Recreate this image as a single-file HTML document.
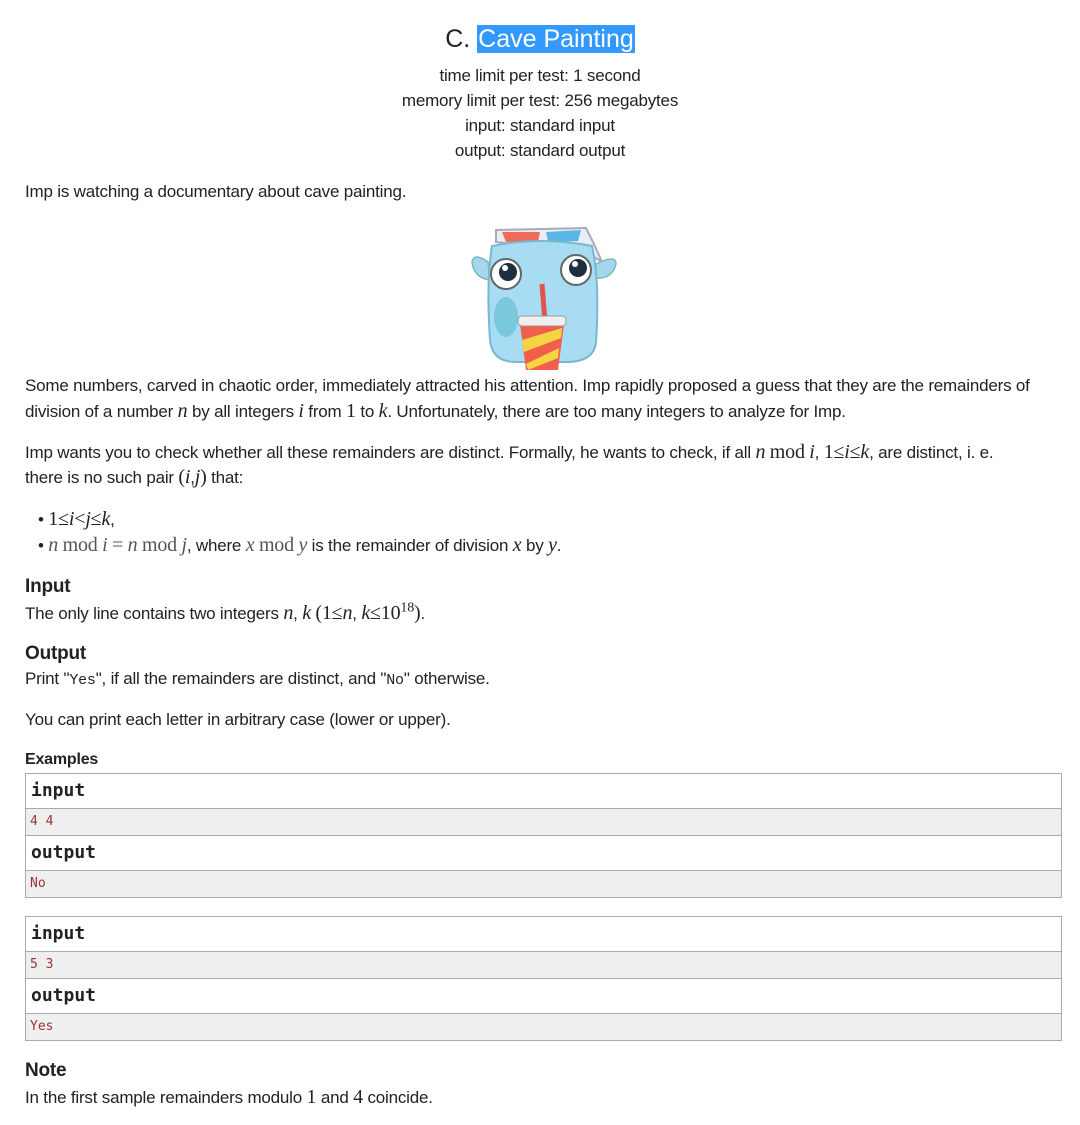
<!DOCTYPE html>
<html><head><meta charset="utf-8"><style>
body{margin:0;width:1080px;height:1125px;background:#fff;position:relative;font-family:"Liberation Sans",Arial,sans-serif;color:#222;font-size:17px;overflow:hidden}
.l{position:absolute;left:25px;white-space:nowrap;line-height:20px;letter-spacing:-0.2px}
.c{position:absolute;left:0;width:1080px;text-align:center;line-height:20px;letter-spacing:-0.2px}
.m{font-family:"Liberation Serif",serif;font-style:italic;font-size:20px}
.r{font-family:"Liberation Serif",serif;font-size:20px}
.h{font-weight:bold;font-size:19px}
.tt{font-family:"Liberation Mono",monospace;font-size:15px}
sup{line-height:0;font-size:14px}
.box{position:absolute;left:25px;width:1035px;border:1px solid #aaa;}
.hd{height:34px;line-height:34px;padding-left:5px;font-family:"DejaVu Sans Mono",monospace;font-weight:bold;font-size:18px;background:#fff;border-bottom:1px solid #aaa}
.dt{height:26px;line-height:26px;padding-left:4px;font-family:"DejaVu Sans Mono",monospace;font-size:13px;color:#993333;background:#efefef}
.dt.b{border-bottom:1px solid #aaa}
</style></head><body>
<div class="c" style="top:24px;font-size:25px;line-height:30px;letter-spacing:0">C. <span style="background:#3399ff;color:#fff;padding:0 1px">Cave Painting</span></div>
<div class="c" style="top:66px">time limit per test: 1 second</div>
<div class="c" style="top:91px">memory limit per test: 256 megabytes</div>
<div class="c" style="top:116px">input: standard input</div>
<div class="c" style="top:141px">output: standard output</div>
<div class="l" style="top:182px">Imp is watching a documentary about cave painting.</div>

<svg style="position:absolute;left:466px;top:222px" width="156" height="150" viewBox="0 0 156 150">
<path d="M30 20 L30 8 L120 6 L128 22 L136 40 L120 30 Z" fill="#e8eef3" stroke="#aab" stroke-width="2"/>
<path d="M36 10 L74 10 L72 20 L40 20 Z" fill="#f06a5a"/><path d="M80 10 L115 8 L112 19 L82 20 Z" fill="#5db5e6"/>
<path d="M22 40 Q8 30 6 40 Q8 56 24 58 Z" fill="#a6d7ef" stroke="#7bb" stroke-width="1.5"/>
<path d="M130 42 Q150 32 150 42 Q146 58 128 56 Z" fill="#a6d7ef" stroke="#7bb" stroke-width="1.5"/>
<path d="M26 24 Q75 14 126 24 Q134 60 130 120 Q128 140 100 140 L50 140 Q26 140 24 118 Q20 60 26 24 Z" fill="#a8dcf2" stroke="#7ab7d0" stroke-width="2"/>
<ellipse cx="40" cy="95" rx="12" ry="20" fill="#7ac8dc"/>
<circle cx="40" cy="52" r="15" fill="#fff" stroke="#666" stroke-width="2"/><circle cx="42" cy="50" r="9" fill="#1e2f40"/><circle cx="39" cy="46" r="3" fill="#fff"/>
<circle cx="110" cy="48" r="15" fill="#fff" stroke="#666" stroke-width="2"/><circle cx="112" cy="46" r="9" fill="#1e2f40"/><circle cx="109" cy="42" r="3" fill="#fff"/>
<path d="M76 62 L79 100" stroke="#e0554a" stroke-width="5"/>
<path d="M54 102 L98 102 L92 148 L60 148 Z" fill="#ef5f4b"/>
<path d="M56 118 L96 106 L95 116 L58 130 Z M60 142 L93 126 L92 136 L62 148 Z" fill="#f5d540"/>
<rect x="52" y="94" width="48" height="10" rx="4" fill="#f0f0f0" stroke="#999"/>
</svg>

<div class="l" style="top:376px">Some numbers, carved in chaotic order, immediately attracted his attention. Imp rapidly proposed a guess that they are the remainders of</div>
<div class="l" style="top:401px">division of a number <span class="m">n</span> by all integers <span class="m">i</span> from <span class="r">1</span> to <span class="m">k</span>. Unfortunately, there are too many integers to analyze for Imp.</div>
<div class="l" style="top:442px">Imp wants you to check whether all these remainders are distinct. Formally, he wants to check, if all <span class="m">n</span> <span class="r">mod</span> <span class="m">i</span>, <span class="r">1≤</span><span class="m">i</span><span class="r">≤</span><span class="m">k</span>, are distinct, i. e.</div>
<div class="l" style="top:467px">there is no such pair <span class="r">(</span><span class="m">i</span>,<span class="m">j</span><span class="r">)</span> that:</div>
<div class="l" style="top:509px;left:38px">• <span class="r">1≤</span><span class="m">i</span><span class="r">&lt;</span><span class="m">j</span><span class="r">≤</span><span class="m">k</span>,</div>
<div class="l" style="top:535px;left:38px">• <span class="m" style="color:#555">n</span> <span class="r" style="color:#555">mod</span> <span class="m" style="color:#555">i</span> <span class="r" style="color:#555">=</span> <span class="m" style="color:#555">n</span> <span class="r" style="color:#555">mod</span> <span class="m" style="color:#555">j</span>, where <span class="m" style="color:#555">x</span> <span class="r" style="color:#555">mod</span> <span class="m" style="color:#555">y</span> is the remainder of division <span class="m">x</span> by <span class="m">y</span>.</div>
<div class="l h" style="top:577px">Input</div>
<div class="l" style="top:603px">The only line contains two integers <span class="m">n</span>, <span class="m">k</span> <span class="r">(1≤</span><span class="m">n</span>, <span class="m">k</span><span class="r">≤10<sup>18</sup>)</span>.</div>
<div class="l h" style="top:644px">Output</div>
<div class="l" style="top:669px">Print "<span class="tt">Yes</span>", if all the remainders are distinct, and "<span class="tt">No</span>" otherwise.</div>
<div class="l" style="top:710px">You can print each letter in arbitrary case (lower or upper).</div>
<div class="l" style="top:750px;font-weight:bold;font-size:16px">Examples</div>

<div class="box" style="top:773px"><div class="hd">input</div><div class="dt b">4 4</div><div class="hd">output</div><div class="dt">No</div></div>
<div class="box" style="top:916px"><div class="hd">input</div><div class="dt b">5 3</div><div class="hd">output</div><div class="dt">Yes</div></div>

<div class="l h" style="top:1061px">Note</div>
<div class="l" style="top:1087px">In the first sample remainders modulo <span class="r">1</span> and <span class="r">4</span> coincide.</div>
</body></html>
